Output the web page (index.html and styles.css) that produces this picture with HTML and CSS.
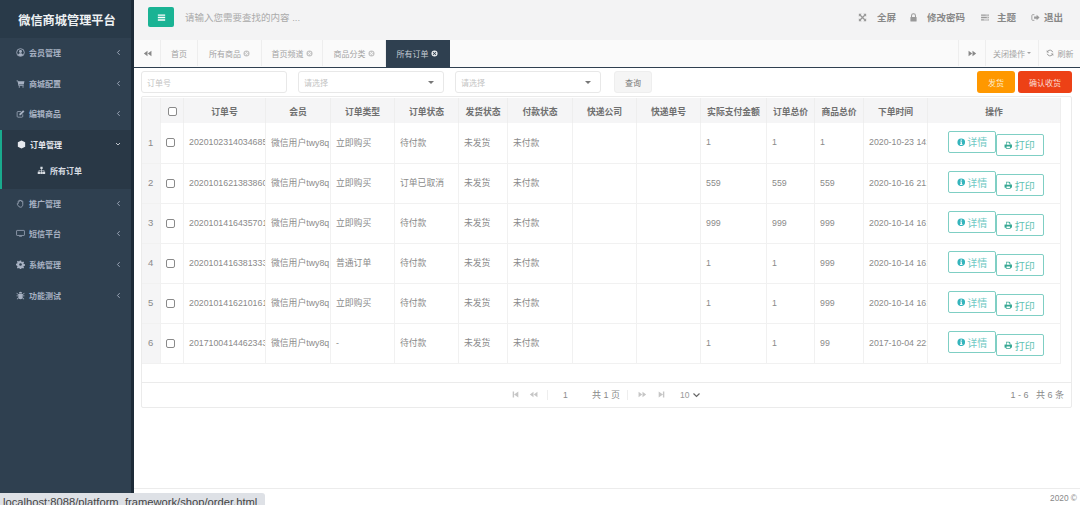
FILE: index.html
```html
<!DOCTYPE html>
<html lang="zh-CN">
<head>
<meta charset="utf-8">
<title>微信商城管理平台</title>
<link rel="stylesheet" href="styles.css">
</head>
<body>
<svg class="sprite" xmlns="http://www.w3.org/2000/svg">
  <symbol id="i-user" viewBox="0 0 16 16"><circle cx="8" cy="8" r="6.8" fill="none" stroke="currentColor" stroke-width="1.5"/><circle cx="8" cy="6.3" r="2.6" fill="currentColor"/><path d="M3.4 12.4c.8-2 2.6-3 4.6-3s3.800 1 4.600 3c-1.200 1.300-2.800 2-4.600 2s-3.400-.7-4.600-2z" fill="currentColor"/></symbol>
  <symbol id="i-cart" viewBox="0 0 16 16"><path d="M1 2.500h2.600l.5 1.500H15l-1.300 5.800H5.400l.3 1.400h8v1.300H4.600L2.700 3.800H1z" fill="currentColor"/><circle cx="6" cy="14" r="1.300" fill="currentColor"/><circle cx="12.500" cy="14" r="1.300" fill="currentColor"/></symbol>
  <symbol id="i-edit" viewBox="0 0 16 16"><path d="M12 9.500V13a1.500 1.500 0 0 1-1.500 1.500h-7A1.500 1.500 0 0 1 2 13V6a1.500 1.500 0 0 1 1.500-1.500H9" fill="none" stroke="currentColor" stroke-width="1.300"/><path d="M6 8.600 12.600 2 15 4.400 8.400 11H6z" fill="currentColor"/></symbol>
  <symbol id="i-cube" viewBox="0 0 16 16"><path d="M8 .8 14.500 4v8L8 15.200 1.500 12V4z" fill="currentColor"/></symbol>
  <symbol id="i-sitemap" viewBox="0 0 16 16"><path d="M6 1.500h4v4H8.600v2h4.400v2.800h1.500v4h-4.200v-4H12V8.500H8.600v1.800H10v4H6v-4h1.400V8.500H4v1.800h1.500v4H1.300v-4H3V7.500h4.400v-2H6z" fill="currentColor"/></symbol>
  <symbol id="i-hand" viewBox="0 0 16 16"><path d="M4 8V4.200a1 1 0 0 1 2 0V3a1 1 0 0 1 2 0v.6a1 1 0 0 1 2 0v1a1 1 0 0 1 2 0V10c0 2.600-1.600 4.600-4 4.600-2 0-3-.9-4-2.500L2.300 9.300c-.7-1.200 1-2.100 1.700-1.300z" fill="none" stroke="currentColor" stroke-width="1.400"/></symbol>
  <symbol id="i-desktop" viewBox="0 0 16 16"><rect x="1" y="2.500" width="14" height="9" rx="1" fill="none" stroke="currentColor" stroke-width="1.300"/><path d="M5.500 14h5v-1h-5z" fill="currentColor"/></symbol>
  <symbol id="i-cog" viewBox="0 0 16 16"><path d="M6.800 1h2.400l.4 2 1.300.6 1.800-1.100 1.700 1.700-1.100 1.700.6 1.400 2.100.4v2.400l-2.100.4-.6 1.300 1.100 1.800-1.700 1.700-1.800-1.100-1.300.6-.4 2.100H6.800l-.4-2.100-1.300-.6-1.800 1.100-1.700-1.700 1.100-1.800-.6-1.300L0 9.100V6.700l2.100-.4.600-1.400-1.100-1.700 1.700-1.700 1.800 1.100 1.300-.6z" fill="currentColor"/><circle cx="8" cy="7.900" r="2.300" fill="#2f4050"/></symbol>
  <symbol id="i-bug" viewBox="0 0 16 16"><path d="M5 4.500a3 3 0 0 1 6 0zM4.200 5.500h7.600V11a3.800 3.800 0 0 1-7.600 0zM1.500 3l3 3-.8.800-3-3zM14.500 3l-3 3 .8.800 3-3zM1 8h3v1.200H1zM12 8h3v1.200h-3zM4 11.500l.8.800-2.600 2.700-.9-.9zM12 11.500l-.8.800 2.600 2.700.9-.9z" fill="currentColor"/></symbol>
  <symbol id="i-arrows" viewBox="0 0 16 16"><path d="M1.500 1.500h5L4.800 3.200 8 6.400l3.200-3.200-1.700-1.700h5v5l-1.700-1.700L9.600 8l3.200 3.200 1.700-1.700v5h-5l1.700-1.700L8 9.600l-3.200 3.200 1.700 1.700h-5v-5l1.700 1.700L6.400 8 3.200 4.800 1.500 6.500z" fill="currentColor"/></symbol>
  <symbol id="i-lock" viewBox="0 0 16 16"><path d="M4.500 7V5a3.500 3.500 0 0 1 7 0v2" fill="none" stroke="currentColor" stroke-width="1.800"/><rect x="2.500" y="7" width="11" height="8" rx="1" fill="currentColor"/></symbol>
  <symbol id="i-tasks" viewBox="0 0 16 16"><path d="M1 2.500h14v2.500H1zM1 6.800h14v2.500H1zM1 11h14v2.500H1z" fill="currentColor"/><path d="M9 3.200h5v1H9zM11 7.500h3v1h-3zM6 11.700h8v1H6z" fill="#f3f3f4"/></symbol>
  <symbol id="i-out" viewBox="0 0 16 16"><path d="M6 3H3a1.500 1.500 0 0 0-1.500 1.500v7A1.500 1.500 0 0 0 3 13h3" fill="none" stroke="currentColor" stroke-width="1.600"/><path d="M10 3.200 15.200 8 10 12.800V10H5.500V6H10z" fill="currentColor"/></symbol>
  <symbol id="i-back" viewBox="0 0 16 16"><path d="M8 3v10L1.500 8zM15 3v10L8.500 8z" fill="currentColor"/></symbol>
  <symbol id="i-fwd" viewBox="0 0 16 16"><path d="M8 3v10l6.500-5zM1 3v10l6.500-5z" fill="currentColor"/></symbol>
  <symbol id="i-first" viewBox="0 0 16 16"><path d="M3 2.500h2.500v11H3zM13 2.500v11L5.500 8z" fill="currentColor"/></symbol>
  <symbol id="i-last" viewBox="0 0 16 16"><path d="M10.500 2.500H13v11h-2.500zM3 2.500v11L10.500 8z" fill="currentColor"/></symbol>
  <symbol id="i-close" viewBox="0 0 16 16"><path fill-rule="evenodd" d="M8 1a7 7 0 1 0 0 14A7 7 0 0 0 8 1zM5.400 4 8 6.600 10.600 4 12 5.400 9.400 8l2.600 2.600-1.400 1.400L8 9.400 5.400 12 4 10.600 6.600 8 4 5.400z" fill="currentColor"/></symbol>
  <symbol id="i-refresh" viewBox="0 0 16 16"><path d="M13.500 6.500A5.800 5.800 0 0 0 3.300 4.600" fill="none" stroke="currentColor" stroke-width="1.900"/><path d="M2.500 9.500a5.800 5.800 0 0 0 10.200 1.900" fill="none" stroke="currentColor" stroke-width="1.900"/><path d="M1.500 2v5h5zM14.500 14V9h-5z" fill="currentColor"/></symbol>
  <symbol id="i-info" viewBox="0 0 16 16"><path fill-rule="evenodd" d="M8 .8a7.200 7.200 0 1 0 0 14.400A7.200 7.200 0 0 0 8 .8zM6.800 3h2.400v2.200H6.800zM6 6.500h3.200v5H10.300V13H5.800v-1.500h1V8H6z" fill="currentColor"/></symbol>
  <symbol id="i-print" viewBox="0 0 16 16"><path fill-rule="evenodd" d="M4 1.500h6l2 2v3.300h2.200c.5 0 .8.300.8.800v4.100c0 .4-.3.800-.8.800H12.500v2H3.500v-2H1.800c-.5 0-.8-.4-.8-.8V7.600c0-.5.300-.8.800-.8H4zm1.200 1.200v4.500h5.600V4.500H9.200V2.700zM4.800 10.500v2.800h6.400v-2.800z" fill="currentColor"/></symbol>
  <symbol id="i-bars" viewBox="0 0 16 16"><path d="M1.500 2.500h13v2.600h-13zM1.500 6.800h13v2.600h-13zM1.500 11h13v2.600h-13z" fill="currentColor"/></symbol>
  <symbol id="i-chev-l" viewBox="0 0 8 12"><path d="M6 2 2.200 6 6 10" fill="none" stroke="currentColor" stroke-width="1.500"/></symbol>
  <symbol id="i-chev-d" viewBox="0 0 12 8"><path d="M2 2l4 4 4-4" fill="none" stroke="currentColor" stroke-width="1.600"/></symbol>
</svg>

<div class="app">
  <aside class="sidebar">
    <h1 class="brand">微信商城管理平台</h1>
    <nav class="nav">
      <a class="nav-item"><svg class="nav-icon"><use href="#i-user"/></svg><span class="nav-label">会员管理</span><svg class="nav-chev"><use href="#i-chev-l"/></svg></a>
      <a class="nav-item"><svg class="nav-icon"><use href="#i-cart"/></svg><span class="nav-label">商城配置</span><svg class="nav-chev"><use href="#i-chev-l"/></svg></a>
      <a class="nav-item"><svg class="nav-icon"><use href="#i-edit"/></svg><span class="nav-label">编辑商品</span><svg class="nav-chev"><use href="#i-chev-l"/></svg></a>
      <div class="nav-group">
        <a class="nav-item is-active"><svg class="nav-icon"><use href="#i-cube"/></svg><span class="nav-label">订单管理</span><svg class="nav-chev-d"><use href="#i-chev-d"/></svg></a>
        <a class="nav-sub"><svg class="nav-icon"><use href="#i-sitemap"/></svg><span class="nav-label">所有订单</span></a>
      </div>
      <a class="nav-item"><svg class="nav-icon"><use href="#i-hand"/></svg><span class="nav-label">推广管理</span><svg class="nav-chev"><use href="#i-chev-l"/></svg></a>
      <a class="nav-item"><svg class="nav-icon"><use href="#i-desktop"/></svg><span class="nav-label">短信平台</span><svg class="nav-chev"><use href="#i-chev-l"/></svg></a>
      <a class="nav-item"><svg class="nav-icon"><use href="#i-cog"/></svg><span class="nav-label">系统管理</span><svg class="nav-chev"><use href="#i-chev-l"/></svg></a>
      <a class="nav-item"><svg class="nav-icon"><use href="#i-bug"/></svg><span class="nav-label">功能测试</span><svg class="nav-chev"><use href="#i-chev-l"/></svg></a>
    </nav>
  </aside>

  <main class="main">
    <header class="topbar">
      <button class="menu-btn"><svg class="menu-icon"><use href="#i-bars"/></svg></button>
      <span class="search">请输入您需要查找的内容 ...</span>
      <div class="top-links">
        <a class="top-link top-link-first"><svg class="top-icon ti-full"><use href="#i-arrows"/></svg>全屏</a>
        <a class="top-link"><svg class="top-icon ti-lock"><use href="#i-lock"/></svg>修改密码</a>
        <a class="top-link"><svg class="top-icon ti-theme"><use href="#i-tasks"/></svg>主题</a>
        <a class="top-link"><svg class="top-icon ti-out"><use href="#i-out"/></svg>退出</a>
      </div>
    </header>

    <div class="tabs">
      <a class="tab-arrow"><svg class="tab-arrow-icon"><use href="#i-back"/></svg></a>
      <a class="tab tab-home">首页</a>
      <a class="tab tab-a">所有商品<svg class="tab-x"><use href="#i-close"/></svg></a>
      <a class="tab tab-b">首页频道<svg class="tab-x"><use href="#i-close"/></svg></a>
      <a class="tab tab-c">商品分类<svg class="tab-x"><use href="#i-close"/></svg></a>
      <a class="tab tab-a is-current">所有订单<svg class="tab-x"><use href="#i-close"/></svg></a>
      <span class="tabs-fill"></span>
      <a class="tab-arrow tab-arrow-r"><svg class="tab-arrow-icon"><use href="#i-fwd"/></svg></a>
      <a class="tab-op">关闭操作<span class="caret"></span></a>
      <a class="tab-refresh"><svg class="refresh-icon"><use href="#i-refresh"/></svg>刷新</a>
    </div>

    <section class="content">
      <div class="toolbar">
        <div class="field field-input">订单号</div>
        <div class="field field-select">请选择<span class="caret caret-lg"></span></div>
        <div class="field field-select">请选择<span class="caret caret-lg"></span></div>
        <button class="btn-query">查询</button>
        <span class="toolbar-fill"></span>
        <button class="btn-ship">发货</button>
        <button class="btn-confirm">确认收货</button>
      </div>

      <div class="grid-box">
        <table class="grid">
          <colgroup>
            <col class="c-num"><col class="c-chk"><col class="c-order"><col class="c-member"><col class="c-64"><col class="c-64"><col class="c-49"><col class="c-65"><col class="c-64"><col class="c-64"><col class="c-66"><col class="c-48"><col class="c-49"><col class="c-64"><col class="c-op">
          </colgroup>
          <thead>
            <tr>
              <th></th><th><span class="check"></span></th><th>订单号</th><th>会员</th><th>订单类型</th><th>订单状态</th><th>发货状态</th><th>付款状态</th><th>快递公司</th><th>快递单号</th><th>实际支付金额</th><th>订单总价</th><th>商品总价</th><th>下单时间</th><th>操作</th>
            </tr>
          </thead>
          <tbody>
            <tr><td class="num">1</td><td class="chk"><span class="check"></span></td><td>2020102314034685</td><td>微信用户twy8q</td><td>立即购买</td><td>待付款</td><td>未发货</td><td>未付款</td><td></td><td></td><td>1</td><td>1</td><td>1</td><td>2020-10-23 14:03</td><td class="ops"><div class="op-wrap"><a class="op-btn"><svg class="op-icon"><use href="#i-info"/></svg>详情</a><a class="op-btn op-print"><svg class="op-icon"><use href="#i-print"/></svg>打印</a></div></td></tr>
            <tr><td class="num">2</td><td class="chk"><span class="check"></span></td><td>2020101621383860</td><td>微信用户twy8q</td><td>立即购买</td><td>订单已取消</td><td>未发货</td><td>未付款</td><td></td><td></td><td>559</td><td>559</td><td>559</td><td>2020-10-16 21:38</td><td class="ops"><div class="op-wrap"><a class="op-btn"><svg class="op-icon"><use href="#i-info"/></svg>详情</a><a class="op-btn op-print"><svg class="op-icon"><use href="#i-print"/></svg>打印</a></div></td></tr>
            <tr><td class="num">3</td><td class="chk"><span class="check"></span></td><td>2020101416435701</td><td>微信用户twy8q</td><td>立即购买</td><td>待付款</td><td>未发货</td><td>未付款</td><td></td><td></td><td>999</td><td>999</td><td>999</td><td>2020-10-14 16:43</td><td class="ops"><div class="op-wrap"><a class="op-btn"><svg class="op-icon"><use href="#i-info"/></svg>详情</a><a class="op-btn op-print"><svg class="op-icon"><use href="#i-print"/></svg>打印</a></div></td></tr>
            <tr><td class="num">4</td><td class="chk"><span class="check"></span></td><td>2020101416381333</td><td>微信用户twy8q</td><td>普通订单</td><td>待付款</td><td>未发货</td><td>未付款</td><td></td><td></td><td>1</td><td>1</td><td>999</td><td>2020-10-14 16:38</td><td class="ops"><div class="op-wrap"><a class="op-btn"><svg class="op-icon"><use href="#i-info"/></svg>详情</a><a class="op-btn op-print"><svg class="op-icon"><use href="#i-print"/></svg>打印</a></div></td></tr>
            <tr><td class="num">5</td><td class="chk"><span class="check"></span></td><td>2020101416210161</td><td>微信用户twy8q</td><td>立即购买</td><td>待付款</td><td>未发货</td><td>未付款</td><td></td><td></td><td>1</td><td>1</td><td>999</td><td>2020-10-14 16:21</td><td class="ops"><div class="op-wrap"><a class="op-btn"><svg class="op-icon"><use href="#i-info"/></svg>详情</a><a class="op-btn op-print"><svg class="op-icon"><use href="#i-print"/></svg>打印</a></div></td></tr>
            <tr><td class="num">6</td><td class="chk"><span class="check"></span></td><td>2017100414462343</td><td>微信用户twy8q</td><td>-</td><td>待付款</td><td>未发货</td><td>未付款</td><td></td><td></td><td>1</td><td>1</td><td>99</td><td>2017-10-04 22:14</td><td class="ops"><div class="op-wrap"><a class="op-btn"><svg class="op-icon"><use href="#i-info"/></svg>详情</a><a class="op-btn op-print"><svg class="op-icon"><use href="#i-print"/></svg>打印</a></div></td></tr>
          </tbody>
        </table>
        <div class="pager">
          <div class="pager-mid">
            <svg class="pg-icon"><use href="#i-first"/></svg>
            <svg class="pg-icon"><use href="#i-back"/></svg>
            <span class="pg-sep"></span>
            <span class="pg-num">1</span>
            <span class="pg-total">共 1 页</span>
            <span class="pg-sep"></span>
            <svg class="pg-icon"><use href="#i-fwd"/></svg>
            <svg class="pg-icon pg-icon-end"><use href="#i-last"/></svg>
            <span class="pg-size">10<svg class="pg-chev"><use href="#i-chev-d"/></svg></span>
          </div>
          <span class="pg-info">1 - 6 &nbsp;&nbsp;共 6 条</span>
        </div>
      </div>
    </section>

    <footer class="footer">2020 ©</footer>
  </main>
</div>
<div class="statusbar">localhost:8088/platform_framework/shop/order.html</div>
</body>
</html>
```

FILE: styles.css
```css
* { box-sizing: border-box; }
html, body { margin: 0; height: 100%; overflow: hidden; }
body { font-family: "Liberation Sans", "Noto Sans CJK SC", sans-serif; font-size: 9px; color: #777; background: #fff; }
.sprite { display: none; }
button { font: inherit; border: 0; padding: 0; }

.app { display: flex; height: 505px; }

/* sidebar */
.sidebar { width: 134px; flex: none; background: #2f4050; border-right: 3px solid #1d2b38; }
.brand { margin: 0; height: 38px; padding: 2px 0 0 3px; display: flex; align-items: center; justify-content: center; font-size: 12.2px; font-weight: 700; color: #eef1f3; background: #293a49; }
.nav-item { height: 30.7px; padding: 0 0 2px 16px; display: flex; align-items: center; color: #a7b1c2; font-weight: 700; font-size: 8px; }
.nav-icon { width: 9px; height: 9px; margin-right: 4px; flex: none; }
.nav-label { white-space: nowrap; }
.nav-chev { width: 5px; height: 7px; margin-left: auto; margin-right: 10px; }
.nav-group { background: #293846; border-left: 2px solid #19aa8d; }
.is-active { padding-left: 15px; color: #e6e9ee; }
.nav-chev-d { width: 6px; height: 4px; margin-left: auto; margin-right: 10px; }
.nav-sub { height: 28px; padding: 0 0 9px 35px; display: flex; align-items: center; color: #d8dde3; font-weight: 700; font-size: 8px; }

/* main */
.main { flex: 1; min-width: 0; display: flex; flex-direction: column; }
.topbar { height: 40px; flex: none; background: #f3f3f4; display: flex; align-items: center; padding: 0 17px 6px 14px; }
.menu-btn { width: 26px; height: 20px; border-radius: 2px; background: #1ab394; color: #fff; display: flex; align-items: center; justify-content: center; }
.menu-icon { width: 9px; height: 9px; }
.search { margin-left: 11px; color: #aaa; font-size: 9.500px; }
.top-links { margin-left: auto; display: flex; gap: 15px; }
.top-link { display: flex; align-items: center; color: #888; font-size: 9.500px; font-weight: 700; white-space: nowrap; }
.top-link-first { margin-right: -2px; }
.top-icon { width: 9px; height: 9px; color: #999; }
.ti-full { margin-right: 10px; }
.ti-lock { margin-right: 9px; }
.ti-theme { width: 10px; margin-right: 7px; }
.ti-out { margin-right: 4px; }

.tabs { height: 27px; flex: none; display: flex; padding-bottom: 1px; background: #fafafa; color: #a3a3a3; font-size: 8px; }
.tab-arrow { width: 27px; display: flex; align-items: center; justify-content: center; border-right: 1px solid #eee; color: #888; }
.tab-arrow-r { border-right: 0; border-left: 1px solid #eee; }
.tab-arrow-icon { width: 9px; height: 9px; }
.tab { display: flex; align-items: center; justify-content: center; border-right: 1px solid #eee; white-space: nowrap; }
.tab-home { width: 37px; }
.tab-a { width: 64px; }
.tab-b { width: 61px; }
.tab-c { width: 63px; }
.tab-x { width: 7px; height: 7px; margin-left: 2px; color: #c4c4c4; }
.is-current { margin-bottom: -1px; padding-right: 2px; background: #2f4050; color: #c3cbd3; border-right: 0; }
.is-current .tab-x { color: #e8ebee; }
.tabs-fill { flex: 1; }
.tab-op { width: 54px; display: flex; align-items: center; justify-content: center; border-left: 1px solid #eee; border-right: 1px solid #eee; white-space: nowrap; }
.caret { display: inline-block; width: 0; height: 0; margin-left: 2px; border-left: 2.500px solid transparent; border-right: 2.500px solid transparent; border-top: 2.500px solid currentColor; }
.tab-refresh { width: 41px; display: flex; align-items: center; justify-content: center; white-space: nowrap; }
.refresh-icon { width: 8px; height: 8px; margin-right: 4px; color: #999; }

.content { flex: 1; min-height: 0; border-top: 1px solid #2f4050; padding: 3px 8px 0 7px; }

.toolbar { height: 22px; display: flex; align-items: stretch; gap: 11px; }
.field { width: 146px; border: 1px solid #e8e8e8; border-radius: 3px; background: #fff; color: #c4c4c4; font-size: 8px; display: flex; align-items: center; padding-left: 5px; }
.caret-lg { margin-left: auto; margin-right: 9px; color: #777; border-left-width: 3.500px; border-right-width: 3.500px; border-top-width: 3.500px; }
.btn-query { width: 38px; margin-left: 2px; border-radius: 3px; background: #f5f5f5; border: 1px solid #eee; color: #777; font-size: 8px; }
.toolbar-fill { flex: 1; }
.btn-ship { width: 38px; margin-right: -8px; border-radius: 3px; background: #ff9800; color: #fdeccf; font-size: 8px; }
.btn-confirm { width: 54px; border-radius: 3px; background: #ed4116; color: #fbdcd3; font-size: 8px; }

.grid-box { margin-top: 3px; height: 311.500px; border: 1px solid #ebebeb; border-radius: 2px; }
.grid { width: 918px; table-layout: fixed; border-collapse: collapse; margin-top: 1px; }
.c-num { width: 18px; } .c-chk { width: 23px; } .c-order { width: 82px; } .c-member { width: 65px; }
.c-64 { width: 64px; } .c-49 { width: 49px; } .c-65 { width: 65px; } .c-66 { width: 66px; } .c-48 { width: 48px; } .c-op { width: 133px; }
.grid th { height: 25px; padding: 1px 0 0 1px; background: #f5f5f6; border-right: 1px solid #eee; color: #6f6f6f; font-size: 8.800px; font-weight: 700; white-space: nowrap; overflow: hidden; }
.grid td { height: 40px; padding: 0 0 1px 5.500px; border-right: 1px solid #f1f1f1; border-bottom: 1px solid #f1f1f1; color: #8a8a8a; font-size: 8.800px; white-space: nowrap; overflow: hidden; }
.grid td.num { padding: 0 0 1px; text-align: center; background: #f5f5f6; font-size: 9.500px; }
.grid td.chk { padding: 0 0 1px 5px; }
.check { display: inline-block; width: 9px; height: 9px; vertical-align: middle; border: 1px solid #8a8a8a; border-radius: 2px; background: #fff; }
.grid td.ops { padding: 1px 0 0 20.500px; overflow: visible; }
.op-wrap { display: flex; align-items: flex-start; }
.op-btn { width: 48px; height: 22px; display: flex; align-items: center; justify-content: center; border: 1px solid #7fcfc4; border-radius: 2px; background: #fff; color: #6fc9c4; font-size: 10px; }
.op-print { margin-top: 3px; margin-left: -.5px; color: #62c2b2; }
.op-icon { width: 8.500px; height: 8.500px; margin-right: 2px; color: #34b4bc; }
.op-print .op-icon { color: #35a893; }

.pager { margin-top: 18px; height: 25px; border-top: 1px solid #ebebeb; position: relative; display: flex; align-items: center; justify-content: flex-end; padding-right: 7px; color: #8a8a8a; }
.pager-mid { position: absolute; left: 369px; top: 0; height: 100%; display: flex; align-items: center; }
.pg-icon { width: 9px; height: 9px; margin-right: 9px; color: #c6c6c6; }
.pg-sep { width: 1px; height: 10px; background: #eee; }
.pg-num { width: 29px; margin-left: 15px; font-size: 8.500px; }
.pg-total { width: 28px; margin-right: 7px; font-size: 9px; white-space: nowrap; }
.pg-sep + .pg-icon { margin-left: 10px; margin-right: 10px; }
.pg-icon-end { margin-right: 14px; }
.pg-size { display: flex; align-items: center; font-size: 8.500px; color: #999; }
.pg-chev { width: 9px; height: 6px; margin-left: 3px; color: #666; }
.pg-info { font-size: 9px; white-space: nowrap; }

.footer { height: 17px; flex: none; border-top: 1px solid #ececec; padding: 4px 3px 0 0; text-align: right; font-size: 8.300px; color: #888; }

.statusbar { position: absolute; left: 0; bottom: 0; width: 265px; height: 12px; padding: 0 0 0 3px; background: #dee1e6; border-top-right-radius: 3px; color: #444; font-size: 11.200px; line-height: 19px; white-space: nowrap; overflow: hidden; }
```
